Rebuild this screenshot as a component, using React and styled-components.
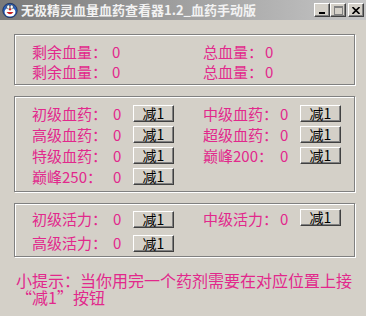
import React from 'react';
import styled, { createGlobalStyle } from 'styled-components';

const GlobalStyle = createGlobalStyle`
  body {
    margin: 0;
    background: #d4d0c8;
  }
`;

const Window = styled.div`
  width: 366px;
  height: 316px;
  background: #d4d0c8;
  font-family: "Noto Sans CJK SC", "Noto Sans", sans-serif;
  display: flex;
  flex-direction: column;
  overflow: hidden;
`;

const TitleBar = styled.div`
  height: 20px;
  display: flex;
  align-items: center;
  padding: 0 2px 0 2px;
  background: linear-gradient(to right, #7a7a7a, #c6c6c6);
`;

const TitleText = styled.span`
  margin-left: 3px;
  color: #f2f2f2;
  font-size: 13px;
  font-weight: bold;
  line-height: 20px;
  white-space: nowrap;
`;

const CaptionButtons = styled.div`
  margin-left: auto;
  display: flex;
  align-items: center;
`;

const CaptionButton = styled.div`
  width: 14px;
  height: 12px;
  margin-left: ${(p) => (p.gap ? '2px' : '0')};
  background: #d4d0c8;
  border-top: 1px solid #fff;
  border-left: 1px solid #fff;
  border-right: 1px solid #404040;
  border-bottom: 1px solid #404040;
  box-shadow: inset -1px -1px 0 #808080;
  display: flex;
  align-items: center;
  justify-content: center;
`;

const Content = styled.div`
  padding: 14px 11px 0 14px;
  display: flex;
  flex-direction: column;
`;

const GroupBox = styled.div`
  border: 1px solid #808080;
  box-shadow: inset 1px 1px 0 #fff, 1px 1px 0 #fff;
  padding: ${(p) => p.pad};
  margin-bottom: 11px;
  display: flex;
  flex-direction: column;
`;

const Row = styled.div`
  display: flex;
  align-items: center;
  height: ${(p) => p.h}px;
  padding-left: 17px;
`;

const Cell = styled.div`
  width: ${(p) => p.w}px;
  display: flex;
  align-items: center;
`;

const Label = styled.span`
  width: ${(p) => p.w}px;
  flex: none;
  color: #e2288c;
  font-size: 15px;
  line-height: 18px;
  white-space: nowrap;
`;

const Value = styled.span`
  width: 20px;
  flex: none;
  color: #e2288c;
  font-size: 15px;
  line-height: 18px;
`;

const MinusButton = styled.button`
  width: 41px;
  height: 17px;
  padding: 0 0 1px 0;
  margin-top: ${(p) => p.up || 0}px;
  flex: none;
  display: flex;
  align-items: center;
  justify-content: center;
  background: #d4d0c8;
  border-top: 1px solid #fff;
  border-left: 1px solid #fff;
  border-right: 1px solid #404040;
  border-bottom: 1px solid #404040;
  box-shadow: inset -1px -1px 0 #808080;
  font-family: "Noto Sans CJK SC", sans-serif;
  font-size: 14px;
  line-height: 14px;
  color: #000;
`;

const Tip = styled.div`
  margin-top: 4px;
  margin-left: 2px;
  color: #e2288c;
  font-size: 16px;
  line-height: 17px;
`;

const AppIcon = () => (
  <svg width="16" height="16" viewBox="0 0 16 16">
    <circle cx="8" cy="8.5" r="7.2" fill="#2a5fb8" stroke="#1a2a50" strokeWidth="0.8" />
    <ellipse cx="8" cy="10" rx="5.4" ry="4.6" fill="#fff" />
    <ellipse cx="6.3" cy="5" rx="1.6" ry="2" fill="#fff" stroke="#222" strokeWidth="0.5" />
    <ellipse cx="9.7" cy="5" rx="1.6" ry="2" fill="#fff" stroke="#222" strokeWidth="0.5" />
    <circle cx="8" cy="7.4" r="1.1" fill="#d42020" />
    <path d="M4.5 10 Q8 14.5 11.5 10 Z" fill="#c81e1e" />
  </svg>
);

const potions = [
  [['初级血药：', '0'], ['中级血药：', '0']],
  [['高级血药：', '0'], ['超级血药：', '0']],
  [['特级血药：', '0'], ['巅峰200：', '0']],
  [['巅峰250：', '0']],
];

const energy = [
  [['初级活力：', '0'], ['中级活力：', '0']],
  [['高级活力：', '0']],
];

const ButtonRow = ({ items, h, rightUp }) => (
  <Row h={h}>
    {items.map(([label, val], i) => (
      <Cell key={label} w={i === 0 ? 171 : 142}>
        <Label w={i === 0 ? 81 : 77}>{label}</Label>
        <Value>{val}</Value>
        <MinusButton up={i === 1 ? rightUp : 0}>减1</MinusButton>
      </Cell>
    ))}
  </Row>
);

const App = () => {
  return (
    <Window>
      <GlobalStyle />
      <TitleBar>
        <AppIcon />
        <TitleText>无极精灵血量血药查看器1.2_血药手动版</TitleText>
        <CaptionButtons>
          <CaptionButton>
            <svg width="8" height="8" viewBox="0 0 8 8">
              <rect x="1" y="6" width="6" height="2" fill="#000" />
            </svg>
          </CaptionButton>
          <CaptionButton>
            <svg width="9" height="9" viewBox="0 0 9 9">
              <rect x="0.5" y="0.5" width="8" height="8" fill="none" stroke="#808080" />
              <rect x="0" y="0" width="9" height="2" fill="#808080" />
            </svg>
          </CaptionButton>
          <CaptionButton gap>
            <svg width="8" height="7" viewBox="0 0 8 7">
              <path d="M0.5 0 L7.5 7 M7.5 0 L0.5 7" stroke="#000" strokeWidth="1.6" />
            </svg>
          </CaptionButton>
        </CaptionButtons>
      </TitleBar>
      <Content>
        <GroupBox pad="7px 0 2px 0">
          {[0, 1].map((r) => (
            <Row h={20} key={r}>
              <Cell w={171}>
                <Label w={80}>剩余血量：</Label>
                <Value>0</Value>
              </Cell>
              <Cell w={142}>
                <Label w={62}>总血量：</Label>
                <Value>0</Value>
              </Cell>
            </Row>
          ))}
        </GroupBox>
        <GroupBox pad="6px 0 4px 0">
          {potions.map((items, i) => (
            <ButtonRow key={i} items={items} h={21} />
          ))}
        </GroupBox>
        <GroupBox pad="3px 0 1px 0">
          {energy.map((items, i) => (
            <ButtonRow key={i} items={items} h={24} rightUp={-4} />
          ))}
        </GroupBox>
        <Tip>
          小提示：当你用完一个药剂需要在对应位置上接
          <br />
          “减1”按钮
        </Tip>
      </Content>
    </Window>
  );
};

export default App;
